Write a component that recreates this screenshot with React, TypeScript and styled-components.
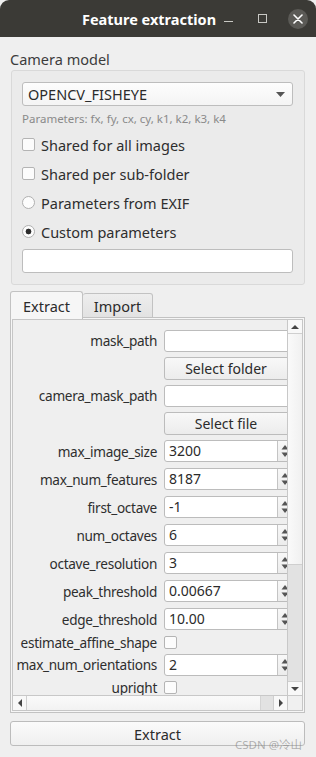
import styled, { createGlobalStyle } from "styled-components";

const GlobalStyle = createGlobalStyle`
  html, body {
    margin: 0;
    padding: 0;
    background: #efefef;
  }
  body {
    font-family: "Noto Sans", "DejaVu Sans", sans-serif;
    color: #3c3c3c;
  }
`;

type SpinField = { label: string; value: string };

const spinRows: SpinField[] = [
  { label: "max_image_size", value: "3200" },
  { label: "max_num_features", value: "8187" },
  { label: "first_octave", value: "-1" },
  { label: "num_octaves", value: "6" },
  { label: "octave_resolution", value: "3" },
  { label: "peak_threshold", value: "0.00667" },
  { label: "edge_threshold", value: "10.00" },
];

const SpinArrows = () => (
  <svg width="8" height="14" viewBox="0 0 8 14">
    <path d="M4 1 L7.5 5.5 L0.5 5.5 Z" fill="#555" />
    <path d="M4 13 L7.5 8.5 L0.5 8.5 Z" fill="#555" />
  </svg>
);

const Arrow = ({ dir }: { dir: "up" | "down" | "left" | "right" }) => {
  const d = {
    up: "M4 1 L8 5 L0 5 Z",
    down: "M0 1 L8 1 L4 5 Z",
    left: "M5 0 L5 8 L1 4 Z",
    right: "M1 0 L1 8 L5 4 Z",
  }[dir];
  const vertical = dir === "up" || dir === "down";
  return (
    <svg width={vertical ? 8 : 6} height={vertical ? 6 : 8} viewBox={vertical ? "0 0 8 6" : "0 0 6 8"}>
      <path d={d} fill="#444" />
    </svg>
  );
};

const Spin = ({ value }: { value: string }) => (
  <SpinBox>
    <SpinText>{value}</SpinText>
    <SpinButtons>
      <SpinArrows />
    </SpinButtons>
  </SpinBox>
);

export default function App() {
  return (
    <Window>
      <GlobalStyle />
      <TitleBar>
        <Title>Feature extraction</Title>
        <WinButtons>
          <MinIcon />
          <MaxIcon />
          <CloseButton>
            <svg width="10" height="10" viewBox="0 0 10 10">
              <path d="M1 1 L9 9 M9 1 L1 9" stroke="#fff" strokeWidth="1.6" strokeLinecap="round" />
            </svg>
          </CloseButton>
        </WinButtons>
      </TitleBar>

      <Body>
        <SectionTitle>Camera model</SectionTitle>
        <GroupBox>
          <Combo>
            <span>OPENCV_FISHEYE</span>
            <svg width="9" height="5" viewBox="0 0 9 5">
              <path d="M0 0 L9 0 L4.5 5 Z" fill="#555" />
            </svg>
          </Combo>
          <Hint>Parameters: fx, fy, cx, cy, k1, k2, k3, k4</Hint>
          <OptionList>
            <Option>
              <CheckBox />
              <span>Shared for all images</span>
            </Option>
            <Option>
              <CheckBox />
              <span>Shared per sub-folder</span>
            </Option>
            <Option>
              <Radio />
              <span>Parameters from EXIF</span>
            </Option>
            <Option>
              <Radio $checked />
              <span>Custom parameters</span>
            </Option>
          </OptionList>
          <LineEdit />
        </GroupBox>

        <TabBar>
          <Tab $active>Extract</Tab>
          <Tab>Import</Tab>
        </TabBar>
        <TabPane>
          <ScrollFrame>
            <ScrollMain>
              <Viewport>
                <Form>
                  <Row $h={22}>
                    <Label>mask_path</Label>
                    <TextField />
                  </Row>
                  <Row $h={23}>
                    <Label />
                    <FieldButton>Select folder</FieldButton>
                  </Row>
                  <Row $h={22}>
                    <Label>camera_mask_path</Label>
                    <TextField />
                  </Row>
                  <Row $h={23}>
                    <Label />
                    <FieldButton>Select file</FieldButton>
                  </Row>
                  {spinRows.map((r) => (
                    <Row key={r.label} $h={23}>
                      <Label>{r.label}</Label>
                      <Spin value={r.value} />
                    </Row>
                  ))}
                  <Row $h={13}>
                    <Label>estimate_affine_shape</Label>
                    <CheckBox />
                  </Row>
                  <Row $h={22}>
                    <Label>max_num_orientations</Label>
                    <Spin value="2" />
                  </Row>
                  <Row $h={13}>
                    <Label>upright</Label>
                    <CheckBox />
                  </Row>
                </Form>
              </Viewport>
              <VScroll>
                <ArrowCell $side="top">
                  <Arrow dir="up" />
                </ArrowCell>
                <VTrack>
                  <VThumb />
                </VTrack>
                <ArrowCell $side="bottom">
                  <Arrow dir="down" />
                </ArrowCell>
              </VScroll>
            </ScrollMain>
            <HScrollRow>
              <HScroll>
                <HArrowCell $side="left">
                  <Arrow dir="left" />
                </HArrowCell>
                <HTrack>
                  <HThumb />
                </HTrack>
                <HArrowCell $side="right">
                  <Arrow dir="right" />
                </HArrowCell>
              </HScroll>
              <Corner />
            </HScrollRow>
          </ScrollFrame>
        </TabPane>

        <PushButton>Extract</PushButton>
      </Body>
      <Watermark>CSDN @冷山</Watermark>
    </Window>
  );
}

const Window = styled.div`
  position: relative;
  width: 316px;
  height: 757px;
  background: #efefef;
  overflow: hidden;
`;

const TitleBar = styled.div`
  height: 37px;
  background: #3b3a36;
  border-radius: 9px 9px 0 0;
  display: flex;
  align-items: center;
  justify-content: center;
  position: relative;
`;

const Title = styled.div`
  color: #ffffff;
  font-weight: bold;
  font-size: 14.5px;
  margin-left: -18px;
`;

const WinButtons = styled.div`
  position: absolute;
  right: 8px;
  top: 9px;
  display: flex;
  align-items: center;
`;

const MinIcon = styled.div`
  width: 9px;
  height: 1px;
  background: #c8c8c4;
  margin-top: 4px;
  margin-right: 25px;
`;

const MaxIcon = styled.div`
  width: 7px;
  height: 7px;
  border: 1px solid #c8c8c4;
  margin-right: 21px;
  margin-top: -2px;
`;

const CloseButton = styled.div`
  width: 20px;
  height: 20px;
  border-radius: 50%;
  background: #5b5a56;
  display: flex;
  align-items: center;
  justify-content: center;
`;

const Body = styled.div`
  padding: 13px 11px 0 10px;
  display: flex;
  flex-direction: column;
`;

const SectionTitle = styled.div`
  font-size: 14.5px;
  line-height: 18px;
  height: 20px;
`;

const GroupBox = styled.div`
  margin-left: 1px;
  border: 1px solid #d9d9d9;
  border-radius: 3px;
  background: #ebebeb;
  padding: 11px 11px 11px 10px;
  display: flex;
  flex-direction: column;
`;

const Combo = styled.div`
  height: 24px;
  box-sizing: border-box;
  border: 1px solid #bdbdbd;
  border-radius: 3px;
  background: linear-gradient(#fdfdfd, #f4f4f4);
  display: flex;
  align-items: center;
  justify-content: space-between;
  padding: 0 7px 0 5px;
  font-size: 14.5px;
  color: #2b2b2b;
`;

const Hint = styled.div`
  font-size: 11.5px;
  color: #8a8a8a;
  height: 16px;
  line-height: 16px;
  margin-top: 5px;
`;

const OptionList = styled.div`
  display: flex;
  flex-direction: column;
  margin-top: 3px;
`;

const Option = styled.label`
  height: 29px;
  display: flex;
  align-items: center;
  gap: 6px;
  font-size: 14.5px;
  color: #2e2e2e;
`;

const CheckBox = styled.span`
  width: 13px;
  height: 13px;
  box-sizing: border-box;
  border: 1px solid #b4b4b4;
  border-radius: 2px;
  background: #fcfcfc;
  flex: none;
`;

const Radio = styled.span<{ $checked?: boolean }>`
  width: 13px;
  height: 13px;
  box-sizing: border-box;
  border: 1px solid #b0b0b0;
  border-radius: 50%;
  background: ${(p) =>
    p.$checked
      ? "radial-gradient(circle, #2d2d2d 0 2.6px, #fcfcfc 3.2px)"
      : "#fcfcfc"};
  flex: none;
`;

const LineEdit = styled.div`
  margin-top: 3px;
  height: 24px;
  box-sizing: border-box;
  border: 1px solid #bdbdbd;
  border-radius: 3px;
  background: #ffffff;
`;

const TabBar = styled.div`
  display: flex;
  align-items: flex-end;
  margin-top: 6px;
  height: 27px;
  position: relative;
  z-index: 1;
  margin-bottom: -1px;
`;

const Tab = styled.div<{ $active?: boolean }>`
  box-sizing: border-box;
  height: ${(p) => (p.$active ? "28px" : "25px")};
  width: ${(p) => (p.$active ? "73px" : "70px")};
  display: flex;
  align-items: center;
  justify-content: center;
  font-size: 14.5px;
  color: #2b2b2b;
  border: 1px solid #c2c2c2;
  border-bottom: ${(p) => (p.$active ? "none" : "1px solid #c2c2c2")};
  border-left: ${(p) => (p.$active ? "1px solid #c2c2c2" : "none")};
  border-radius: 3px 3px 0 0;
  background: ${(p) => (p.$active ? "#f6f6f6" : "linear-gradient(#eeeeee, #e2e2e2)")};
  margin-bottom: ${(p) => (p.$active ? "-1px" : "0")};
`;

const TabPane = styled.div`
  box-sizing: border-box;
  height: 396px;
  border: 1px solid #c2c2c2;
  background: #f6f6f6;
  padding: 1px;
  display: flex;
`;

const ScrollFrame = styled.div`
  flex: 1;
  display: flex;
  flex-direction: column;
  border: 1px solid #c6c6c6;
  min-width: 0;
  background: #efefef;
`;

const ScrollMain = styled.div`
  flex: 1;
  display: flex;
  min-height: 0;
`;

const Viewport = styled.div`
  flex: 1;
  overflow: hidden;
  min-width: 0;
`;

const Form = styled.div`
  width: 300px;
  padding-top: 10px;
  display: flex;
  flex-direction: column;
  gap: 5px;
`;

const Row = styled.div<{ $h: number }>`
  height: ${(p) => p.$h}px;
  display: flex;
  align-items: flex-start;
  gap: 7px;
`;

const Label = styled.div`
  width: 144px;
  flex: none;
  text-align: right;
  font-size: 13.6px;
  letter-spacing: -0.3px;
  line-height: 16px;
  color: #2e2e2e;
  white-space: nowrap;
  align-self: center;
`;

const TextField = styled.div`
  width: 132px;
  height: 22px;
  box-sizing: border-box;
  border: 1px solid #bcbcbc;
  border-radius: 3px;
  background: #ffffff;
`;

const FieldButton = styled.div`
  width: 132px;
  height: 23px;
  box-sizing: border-box;
  border: 1px solid #bcbcbc;
  border-radius: 3px;
  background: linear-gradient(#f8f8f8, #ececec);
  font-size: 14px;
  color: #2b2b2b;
  display: flex;
  align-items: center;
  justify-content: center;
  padding-right: 8px;
`;

const SpinBox = styled.div`
  width: 130px;
  height: 22px;
  box-sizing: border-box;
  border: 1px solid #bcbcbc;
  border-radius: 3px;
  background: #ffffff;
  display: flex;
`;

const SpinText = styled.div`
  flex: 1;
  font-size: 14px;
  line-height: 20px;
  padding-left: 4px;
  color: #2b2b2b;
`;

const SpinButtons = styled.div`
  width: 16px;
  border-left: 1px solid #c4c4c4;
  background: linear-gradient(#f8f8f8, #ececec);
  display: flex;
  align-items: center;
  padding-left: 3px;
  box-sizing: border-box;
`;

const VScroll = styled.div`
  width: 14px;
  flex: none;
  border-left: 1px solid #c8c8c8;
  display: flex;
  flex-direction: column;
  background: #f4f4f4;
`;

const ArrowCell = styled.div<{ $side: "top" | "bottom" }>`
  height: 13px;
  flex: none;
  display: flex;
  align-items: center;
  justify-content: center;
  background: #f8f8f8;
  border-${(p) => (p.$side === "top" ? "bottom" : "top")}: 1px solid #cfcfcf;
`;

const VTrack = styled.div`
  flex: 1;
  display: flex;
  flex-direction: column;
  justify-content: flex-end;
  background: linear-gradient(90deg, #fafafa, #f0f0f0);
`;

const VThumb = styled.div`
  height: 116px;
  background: #e2e2e2;
  border-top: 1px solid #cfcfcf;
`;

const HScrollRow = styled.div`
  height: 14px;
  display: flex;
  flex: none;
  border-top: 1px solid #c8c8c8;
`;

const HScroll = styled.div`
  flex: 1;
  display: flex;
  background: #f8f8f8;
`;

const HArrowCell = styled.div<{ $side: "left" | "right" }>`
  width: 13px;
  display: flex;
  align-items: center;
  justify-content: center;
  border-${(p) => (p.$side === "left" ? "right" : "left")}: 1px solid #cfcfcf;
  background: #f8f8f8;
`;

const HTrack = styled.div`
  flex: 1;
  display: flex;
  justify-content: flex-end;
  background: linear-gradient(#fafafa, #f2f2f2);
`;

const HThumb = styled.div`
  width: 12px;
  background: #e2e2e2;
  border-left: 1px solid #d4d4d4;
`;

const Corner = styled.div`
  width: 14px;
  border-left: 1px solid #c8c8c8;
  background: #f0f0f0;
`;

const PushButton = styled.div`
  margin-top: 8px;
  height: 25px;
  box-sizing: border-box;
  border: 1px solid #bcbcbc;
  border-radius: 3px;
  background: linear-gradient(#fbfbfb, #efefef);
  display: flex;
  align-items: center;
  justify-content: center;
  font-size: 14.5px;
  color: #2b2b2b;
`;

const Watermark = styled.div`
  position: absolute;
  right: 14px;
  bottom: 5px;
  font-size: 11.5px;
  color: rgba(120, 120, 120, 0.55);
  font-family: "Noto Sans", "Noto Sans CJK SC", sans-serif;
`;
